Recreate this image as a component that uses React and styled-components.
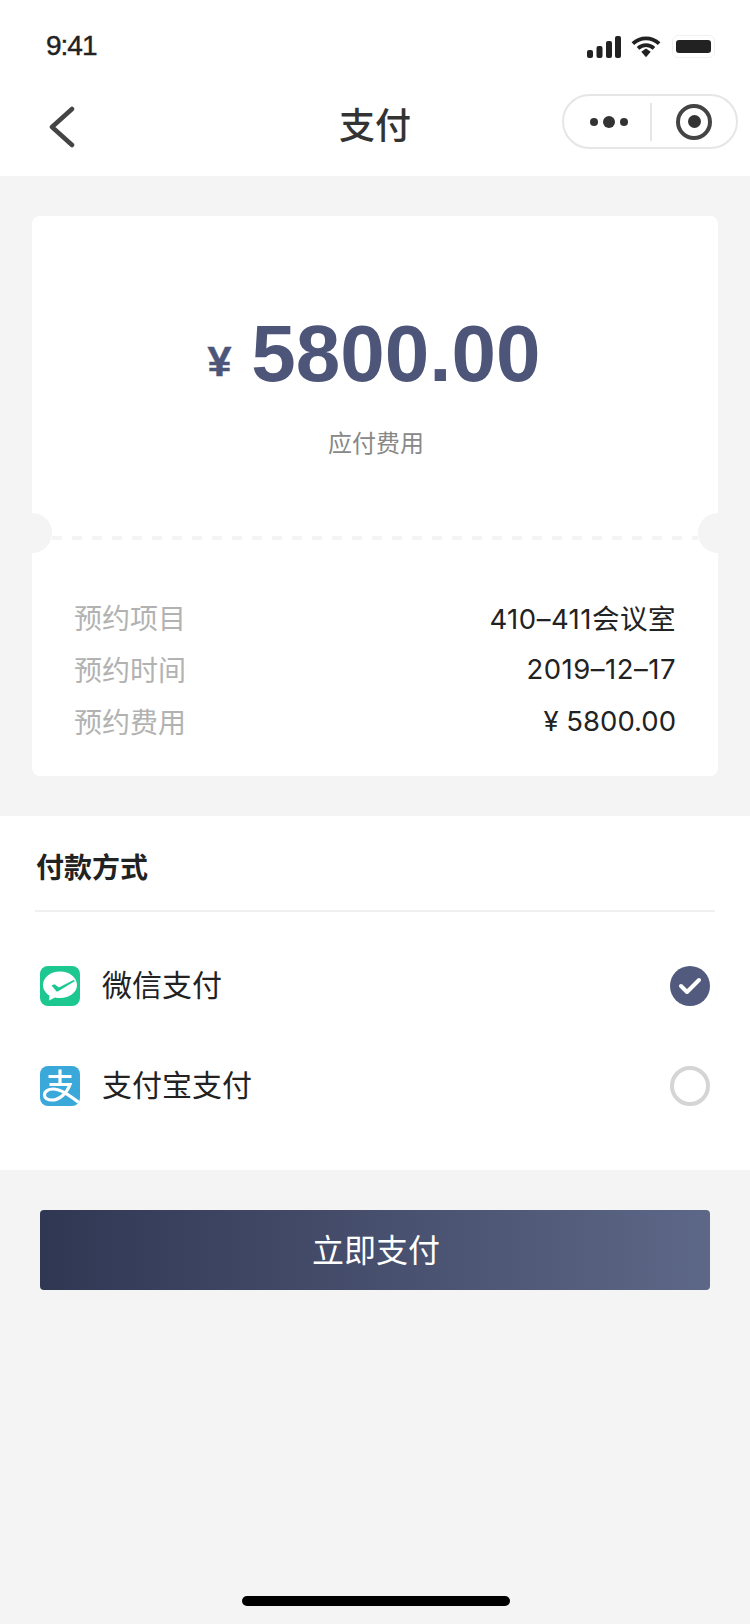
import React from "react";
import styled, { createGlobalStyle } from "styled-components";

const GlobalStyle = createGlobalStyle`
  html, body {
    margin: 0;
    padding: 0;
    background: #f4f4f4;
  }
  body {
    font-family: "Liberation Sans", "Noto Sans CJK SC", sans-serif;
  }
`;

const details = [
  { label: "预约项目", value: "410–411会议室", spaced: true },
  { label: "预约时间", value: "2019–12–17", spaced: true },
  { label: "预约费用", value: "¥ 5800.00" },
];

function WechatIcon() {
  return (
    <svg width="40" height="40" viewBox="0 0 40 40">
      <rect width="40" height="40" rx="8" fill="#1cc790" />
      <path d="M20 5.500C10.300 5.500 3 11.400 3 19c0 4.400 2.500 8.200 6.500 10.600L9 34.500l6-3.100c1.600.4 3.300.6 5 .6 9.700 0 17-5.600 17-13S29.700 5.500 20 5.500z" fill="#fff" />
      <path d="M11.500 19.500l3-1.200 4.500 3.200 14.500-7.500 1.500 1-16.800 10.300c-.8.500-1.500.4-2-.2z" fill="#1cc790" />
    </svg>
  );
}

function AlipayIcon() {
  return (
    <svg width="40" height="40" viewBox="0 0 40 40">
      <defs>
        <clipPath id="alipay-clip">
          <rect width="40" height="40" rx="8" />
        </clipPath>
      </defs>
      <g clipPath="url(#alipay-clip)">
        <rect width="40" height="40" fill="#3aa9da" />
        <g fill="none" stroke="#fff" strokeWidth="3.200">
          <path d="M8.500 10.500h23" />
          <path d="M20 3.500v15" />
          <path d="M9.500 18.500H30C27 27 19.500 34 12 34c-4.500 0-7.500-2-7.500-5 0-3.500 3.800-6 8.500-6 8 0 17 7 28 15" />
        </g>
      </g>
    </svg>
  );
}

function App() {
  return (
    <Page>
      <GlobalStyle />
      <Header>
        <StatusBar>
          <Time>9:41</Time>
          <StatusIcons>
            <svg width="34" height="22" viewBox="0 0 34 22" fill="#222">
              <rect x="0" y="14" width="6" height="8" rx="2" />
              <rect x="9.500" y="10" width="6" height="12" rx="2" />
              <rect x="19" y="5" width="6" height="17" rx="2" />
              <rect x="28" y="0" width="6" height="22" rx="2" />
            </svg>
            <svg width="30" height="23" viewBox="0 0 32 23" fill="none" stroke="#222" strokeWidth="4">
              <path d="M2 8.500c8-7.500 20-7.500 28 0" />
              <path d="M7.500 13.500c5-4.500 12-4.500 17 0" />
              <path d="M11 17l5-3.500 5 3.500-5 6z" fill="#222" stroke="none" />
            </svg>
            <Battery>
              <BatteryLevel />
            </Battery>
          </StatusIcons>
        </StatusBar>
        <NavBar>
          <BackButton>
            <svg width="28" height="42" viewBox="0 0 28 42" fill="none" stroke="#444" strokeWidth="4.500" strokeLinecap="round" strokeLinejoin="round">
              <path d="M23 3L3 21l20 18" />
            </svg>
          </BackButton>
          <Title>支付</Title>
          <Capsule>
            <MoreButton>
              <Dot />
              <Dot $big />
              <Dot />
            </MoreButton>
            <CapsuleDivider />
            <CloseButton>
              <CloseDot />
            </CloseButton>
          </Capsule>
        </NavBar>
      </Header>

      <Ticket>
        <Notch $side="left" />
        <Notch $side="right" />
        <Summary>
          <Amount>
            <Currency>¥</Currency>
            <Price>5800.00</Price>
          </Amount>
          <AmountLabel>应付费用</AmountLabel>
        </Summary>
        <Dashes />
        <Details>
          {details.map((item) => (
            <DetailRow key={item.label}>
              <DetailLabel>{item.label}</DetailLabel>
              <DetailValue $spaced={item.spaced}>{item.value}</DetailValue>
            </DetailRow>
          ))}
        </Details>
      </Ticket>

      <PaySection>
        <PayTitle>付款方式</PayTitle>
        <PayOptions>
          <PayOption>
            <WechatIcon />
            <PayName>微信支付</PayName>
            <Checked>
              <svg width="24" height="20" viewBox="0 0 24 20" fill="none" stroke="#fff" strokeWidth="4" strokeLinecap="round" strokeLinejoin="round">
                <path d="M3 10l6 6L21 4" />
              </svg>
            </Checked>
          </PayOption>
          <PayOption>
            <AlipayIcon />
            <PayName>支付宝支付</PayName>
            <Unchecked />
          </PayOption>
        </PayOptions>
      </PaySection>

      <ButtonWrap>
        <PayButton>立即支付</PayButton>
      </ButtonWrap>

      <HomeBar>
        <HomeIndicator />
      </HomeBar>
    </Page>
  );
}

export default App;

const Page = styled.div`
  width: 750px;
  height: 1624px;
  background: #f4f4f4;
  display: flex;
  flex-direction: column;
  overflow: hidden;
`;

const Header = styled.header`
  background: #fff;
  height: 176px;
`;

const StatusBar = styled.div`
  height: 88px;
  padding: 34px 35px 0 46px;
  box-sizing: border-box;
  display: flex;
  justify-content: space-between;
  align-items: flex-start;
`;

const Time = styled.span`
  font-size: 28px;
  line-height: 24px;
  letter-spacing: -1px;
  color: #222;
  -webkit-text-stroke: 0.4px #222;
`;

const StatusIcons = styled.div`
  display: flex;
  align-items: center;
  gap: 10px;
  margin-top: 1px;
`;

const Battery = styled.div`
  width: 43px;
  height: 23px;
  margin-left: 1px;
  box-sizing: border-box;
  padding: 4px 3px;
  border: 1px solid #f1f1f1;
  border-radius: 6px;
`;

const BatteryLevel = styled.div`
  height: 100%;
  background: #222;
  border-radius: 3px;
`;

const NavBar = styled.div`
  height: 88px;
  display: grid;
  grid-template-columns: 1fr auto 1fr;
  align-items: start;
  padding: 0 12px;
  box-sizing: border-box;
`;

const BackButton = styled.div`
  display: flex;
  margin: 18px 0 0 37px;
`;

const Title = styled.h1`
  margin: 13px 0 0;
  font-size: 36px;
  line-height: 52px;
  font-weight: 500;
  color: #333;
`;

const Capsule = styled.div`
  justify-self: end;
  width: 176px;
  height: 55px;
  margin-top: 6px;
  box-sizing: border-box;
  border: 2px solid #e6e6e6;
  border-radius: 28px;
  display: flex;
  align-items: center;
`;

const MoreButton = styled.div`
  flex: 1;
  padding-left: 3px;
  display: flex;
  align-items: center;
  justify-content: center;
  gap: 5px;
`;

const Dot = styled.span`
  width: ${(p) => (p.$big ? 12 : 8)}px;
  height: ${(p) => (p.$big ? 12 : 8)}px;
  border-radius: 50%;
  background: #333;
`;

const CapsuleDivider = styled.div`
  width: 2px;
  height: 38px;
  background: #e6e6e6;
`;

const CloseButton = styled.div`
  width: 36px;
  height: 36px;
  margin: 0 24px;
  box-sizing: border-box;
  border: 4px solid #444;
  border-radius: 50%;
  display: flex;
  align-items: center;
  justify-content: center;
`;

const CloseDot = styled.span`
  width: 13px;
  height: 13px;
  border-radius: 50%;
  background: #333;
`;

const Ticket = styled.section`
  position: relative;
  margin: 40px 32px;
  height: 560px;
  background: #fff;
  border-radius: 8px;
  display: flex;
  flex-direction: column;
`;

const Notch = styled.span`
  position: absolute;
  top: 297px;
  ${(p) => p.$side}: -20px;
  width: 40px;
  height: 40px;
  border-radius: 50%;
  background: #f4f4f4;
`;

const Summary = styled.div`
  height: 320px;
  display: flex;
  flex-direction: column;
  align-items: center;
  padding-top: 98px;
  box-sizing: border-box;
`;

const Amount = styled.div`
  display: flex;
  align-items: baseline;
  gap: 20px;
  height: 80px;
  margin-right: 2px;
  line-height: 80px;
  color: #4d5679;
  font-weight: 700;
`;

const Currency = styled.span`
  font-size: 43px;
  transform: translateY(-5px);
  -webkit-text-stroke: 0.5px #4d5679;
`;

const Price = styled.span`
  font-size: 80px;
`;

const AmountLabel = styled.div`
  margin-top: 34px;
  padding-left: 2px;
  font-size: 24px;
  line-height: 32px;
  color: #888;
`;

const Dashes = styled.div`
  height: 4px;
  margin: 0 20px;
  background: repeating-linear-gradient(to right, #f4f4f4 0, #f4f4f4 10px, transparent 10px, transparent 20px);
`;

const Details = styled.div`
  padding: 51px 42px 0;
  display: flex;
  flex-direction: column;
`;

const DetailRow = styled.div`
  display: flex;
  justify-content: space-between;
  align-items: center;
  height: 52px;
  font-size: 28px;
`;

const DetailLabel = styled.span`
  color: #b2b2b2;
`;

const DetailValue = styled.span`
  font-family: Inter, "Noto Sans CJK SC", sans-serif;
  font-size: 27.500px;
  letter-spacing: ${(p) => (p.$spaced ? "0.5px" : "0")};
  color: #222;
`;

const PaySection = styled.section`
  background: #fff;
  height: 354px;
  padding: 0 35px;
  box-sizing: border-box;
`;

const PayTitle = styled.div`
  height: 94px;
  line-height: 106px;
  padding: 0 1px;
  font-size: 28px;
  font-weight: 700;
  color: #222;
  border-bottom: 2px solid #f0f0f0;
`;

const PayOptions = styled.div`
  padding: 54px 5px 0;
  display: flex;
  flex-direction: column;
  gap: 60px;
`;

const PayOption = styled.div`
  display: flex;
  align-items: center;
  height: 40px;
`;

const PayName = styled.span`
  flex: 1;
  margin-left: 22px;
  padding-bottom: 6px;
  font-size: 30px;
  color: #222;
`;

const Checked = styled.span`
  width: 40px;
  height: 40px;
  border-radius: 50%;
  background: #525b7e;
  display: flex;
  align-items: center;
  justify-content: center;
`;

const Unchecked = styled.span`
  width: 40px;
  height: 40px;
  box-sizing: border-box;
  border-radius: 50%;
  border: 4px solid #d5d5d5;
`;

const ButtonWrap = styled.div`
  padding: 40px 40px 0;
`;

const PayButton = styled.div`
  height: 80px;
  line-height: 82px;
  padding-left: 2px;
  text-align: center;
  color: #fff;
  font-size: 32px;
  border-radius: 4px;
  background: linear-gradient(to right, #303753, #5d6787);
`;

const HomeBar = styled.div`
  margin-top: auto;
  padding: 0 0 18px 2px;
  display: flex;
  justify-content: center;
`;

const HomeIndicator = styled.div`
  width: 268px;
  height: 10px;
  border-radius: 5px;
  background: #000;
`;
